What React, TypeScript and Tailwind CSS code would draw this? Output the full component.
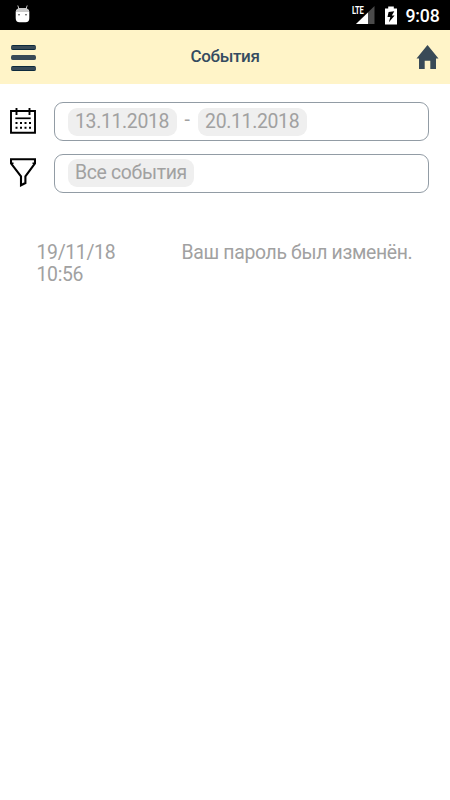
import type { ReactNode } from 'react';

function StatusBar() {
  return (
    <div className="flex h-[30px] items-center bg-black pl-[15px] pr-[10px] text-white">
      <svg width="15" height="18" viewBox="0 0 15 18" className="-mt-[2px]">
        <path d="M2.8 0.5 L4 4 M12.2 0.5 L11 4" stroke="#c4c4c4" strokeWidth="1" />
        <path d="M0.7 7 Q1.2 3.3 5 3.3 H10 Q13.8 3.3 14.3 7 V13 Q14.3 17.3 10.5 17.3 H4.5 Q0.7 17.3 0.7 13 Z" fill="#fff" />
        <path d="M0.8 7 Q1.2 3.3 5 3.3 H10 Q13.8 3.3 14.2 7 Z" fill="#c9c9c9" />
        <circle cx="4" cy="9.8" r="0.8" fill="#333" />
        <circle cx="11" cy="9.8" r="0.8" fill="#333" />
      </svg>
      <svg width="24" height="20" viewBox="0 0 24 20" className="ml-auto">
        <path d="M23.5 1 V19 H5 Z" fill="#4b4b4b" />
        <path d="M17 7.5 V19 H5 Z" fill="#fff" />
        <path d="M0 1 H13 V10 H0 Z" fill="#000" />
        <text x="1" y="9" textLength="11.5" lengthAdjust="spacingAndGlyphs" fill="#fff" className="font-['Roboto',sans-serif] text-[10.5px] font-bold">LTE</text>
      </svg>
      <svg width="12" height="19" viewBox="0 0 12 19" className="ml-[10px]">
        <path d="M3.2 0.5 H8.8 V2.5 H12 V18.5 H0 V2.5 H3.2 Z" fill="#fff" />
        <path d="M9.3 5.2 L3.6 6 L2.5 11 H5.3 L3.9 16.2 L9.6 9.6 H6.8 Z" fill="#000" />
      </svg>
      <span className="ml-[8.5px] w-[34.5px] whitespace-nowrap pt-[2px] text-[17.7px] leading-[28px] font-medium tracking-[-0.2px]">9:08</span>
    </div>
  );
}

function Header() {
  return (
    <header className="flex h-[53.5px] items-center justify-between bg-[#fff4c8] pl-[11px] pr-[11px]">
      <button className="flex w-[50px] flex-col gap-[5.5px] pt-[2px]" aria-label="Menu">
        <span className="h-[5px] w-[25px] rounded-[2px] border-y border-[#0d2a3d] bg-[#394a57]" />
        <span className="h-[5px] w-[25px] rounded-[2px] border-y border-[#394a57] bg-[#394a57]" />
        <span className="h-[5px] w-[25px] rounded-[2px] border-y border-[#0d2a3d] bg-[#394a57]" />
      </button>
      <h1 className="pb-[1.5px] text-[17px] leading-[20px] font-medium tracking-[-0.35px] text-[#344b60]">События</h1>
      <button className="flex w-[50px] justify-end" aria-label="Home">
        <svg width="23" height="24" viewBox="0 0 23 24">
          <path d="M11.5 0 L22.5 13.5 H20 V24 H14.3 V15.7 H8.7 V24 H3 V13.5 H0.5 Z" fill="#394a57" />
        </svg>
      </button>
    </header>
  );
}

function CalendarIcon() {
  return (
    <svg width="26" height="26" viewBox="0 0 26 26" fill="none" stroke="#000" className="-mt-[2px]">
      <path d="M1 3 H25 V24.7 H1 Z" strokeWidth="1.9" />
      <path d="M6.5 0 V7 M19.5 0 V7" strokeWidth="1.9" />
      <path d="M5.3 10.3 H20.7" strokeWidth="1.7" />
      <path d="M5.5 15 H21 M5.5 19.8 H21" strokeWidth="2" strokeDasharray="2 2.5" />
    </svg>
  );
}

function FilterIcon() {
  return (
    <svg width="26" height="29" viewBox="0 0 26 29" fill="none" stroke="#000" className="-mt-[2px]">
      <path d="M1 1.2 H25 V5.3 L15.4 18.4 V25 L11 27.3 V18.4 L1 5.3 Z" strokeWidth="2.1" />
      <path d="M1 5.3 H3.5 M22.5 5.3 H25" strokeWidth="1.4" />
    </svg>
  );
}

function Chip({ children }: { children: ReactNode }) {
  return <span className="h-[28px] rounded-[9px] bg-[#efefef] px-[7.5px] leading-[27px] whitespace-nowrap">{children}</span>;
}

function FilterRow({ icon, children }: { icon: ReactNode; children: ReactNode }) {
  return (
    <div className="flex h-[39px] items-center">
      <div className="flex w-[44px] shrink-0">{icon}</div>
      <div className="flex h-[39px] w-[375px] items-start rounded-[9px] border border-[#929ca5] px-[13px] pt-[4.5px]">{children}</div>
    </div>
  );
}

export default function App() {
  return (
    <div className="min-h-[800px] w-[450px] bg-white font-['Roboto',sans-serif] text-[19.4px] tracking-[-0.33px] text-[#a1a1a1]">
      <StatusBar />
      <Header />
      <main className="pt-[18.5px]">
        <div className="flex flex-col gap-[12.5px] pl-[9.5px]">
          <FilterRow icon={<CalendarIcon />}>
            <Chip>13.11.2018</Chip>
            <span className="w-[21px] text-center leading-[24px]">-</span>
            <Chip>20.11.2018</Chip>
          </FilterRow>
          <FilterRow icon={<FilterIcon />}>
            <Chip>Все события</Chip>
          </FilterRow>
        </div>
        <div className="mt-[49px] flex pl-[36.5px] leading-[22.5px]">
          <div className="w-[145px]">
            <p>19/11/18</p>
            <p>10:56</p>
          </div>
          <p className="whitespace-nowrap">Ваш пароль был изменён.</p>
        </div>
      </main>
    </div>
  );
}
